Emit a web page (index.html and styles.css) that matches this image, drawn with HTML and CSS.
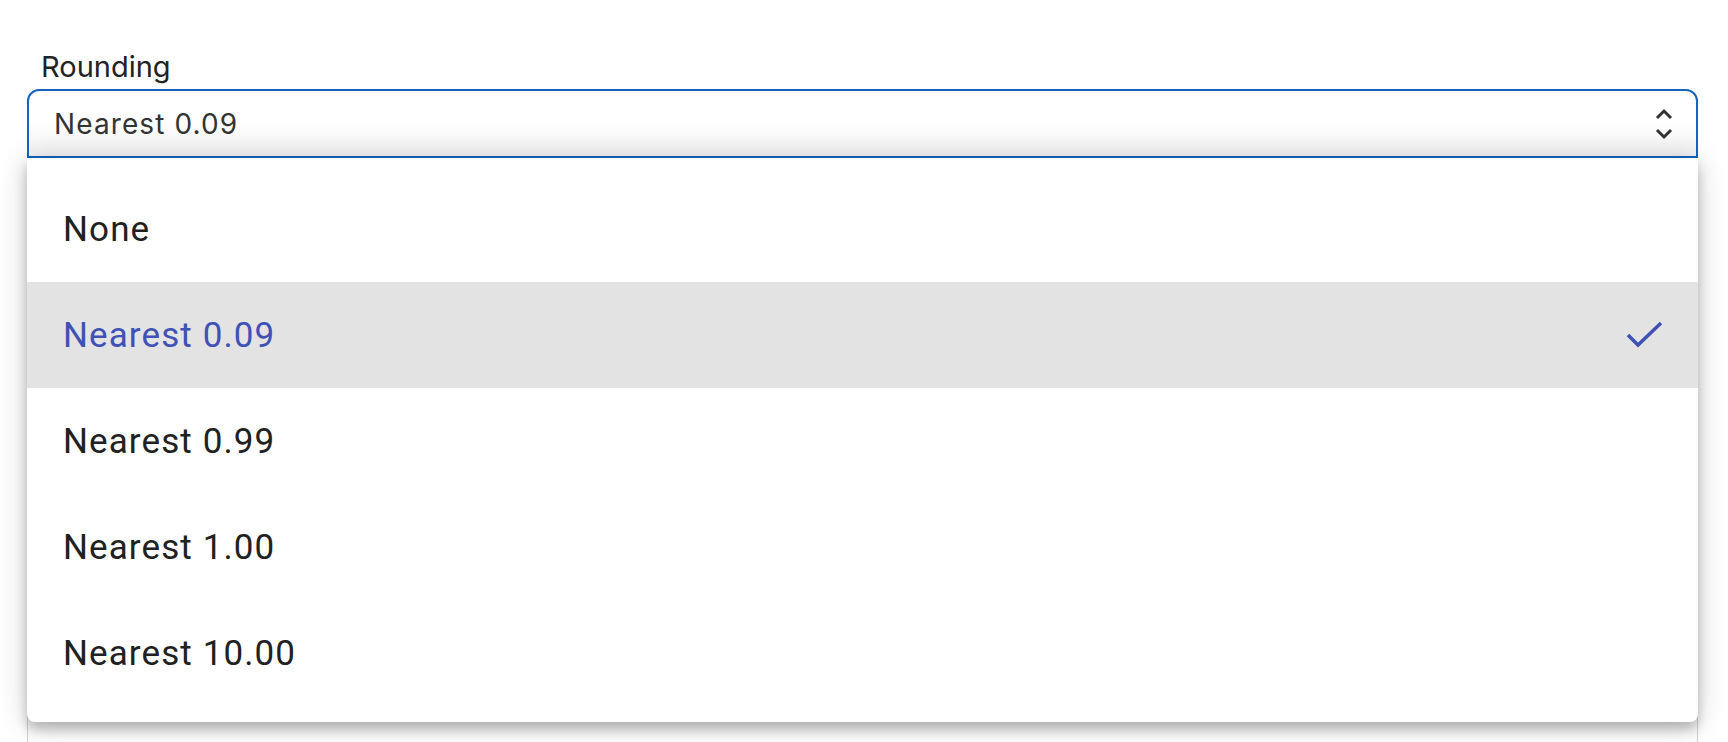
FILE: index.html
```html
<!DOCTYPE html>
<html lang="en">
<head>
<meta name="viewport" content="width=device-width, initial-scale=1">
<title>Rounding</title>
<link rel="stylesheet" href="styles.css">
</head>
<body>

<div class="form">
    <div class="field">
        <label class="field-label">Rounding</label>
        <div class="select-wrap">
            <div class="select open">
                <span class="select-value">Nearest 0.09</span>
                <svg class="select-arrows" width="18" height="34" viewBox="0 0 18 34">
                    <path d="M2 11 L9 4 L16 11" fill="none" stroke="#333" stroke-width="3"/>
                    <path d="M2 23 L9 30 L16 23" fill="none" stroke="#333" stroke-width="3"/>
                </svg>
            </div>

            <ul class="menu">
                <li class="menu-item">None</li>
                <li class="menu-item selected">Nearest 0.09
                    <svg class="check" width="38" height="28" viewBox="0 0 38 28">
                        <polyline points="2,14 12,24 35,2" fill="none" stroke="#3f51b5" stroke-width="3.5"/>
                    </svg>
                </li>
                <li class="menu-item">Nearest 0.99</li>
                <li class="menu-item">Nearest 1.00</li>
                <li class="menu-item">Nearest 10.00</li>
            </ul>
        </div>
    </div>

    <!-- next field, mostly hidden behind the open menu -->
    <div class="field next-field">
        <div class="input textarea"></div>
    </div>
</div>

</body>
</html>
```

FILE: styles.css
```css
* {
    box-sizing: border-box;
}

body {
    margin: 0;
    background: #fff;
    font-family: 'Inter', 'Roboto', sans-serif;
    color: #222;
    height: 742px;
    overflow: hidden;
}

.form {
    padding: 50px 30px 0 27px;
}

.field {
    margin-bottom: 28px;
}

.field-label {
    display: block;
    padding-left: 14px;
    font-size: 29px;
    line-height: 34px;
    margin-bottom: 5px;
    color: #222;
}

.select-wrap {
    position: relative;
}

.select {
    display: flex;
    align-items: center;
    justify-content: space-between;
    height: 69px;
    padding: 0 23px 0 25px;
    border: 2px solid #1565c0;
    border-radius: 12px;
    background: linear-gradient(#fff 45%, #f2f2f2);
}

.select.open {
    border-radius: 12px 12px 0 0;
}

.select-value {
    font-size: 28px;
    letter-spacing: 1.1px;
    color: #333;
}

.next-field {
    margin-top: 540px;
}

.input {
    height: 69px;
    border: 1px solid #d2d2d2;
    border-radius: 12px;
    padding: 0 24px;
    font-size: 28px;
    display: flex;
    align-items: center;
}

.textarea {
    height: 220px;
}

.menu {
    position: absolute;
    top: 100%;
    left: 0;
    right: 0;
    z-index: 10;
    margin: 0;
    padding: 18px 0 16px;
    list-style: none;
    background: #fff;
    border-radius: 0 0 8px 8px;
    box-shadow: 0 8px 12px rgba(0, 0, 0, 0.22), 0 2px 30px rgba(0, 0, 0, 0.18);
}

.menu-item {
    display: flex;
    align-items: center;
    justify-content: space-between;
    height: 106px;
    padding: 0 34px 0 36px;
    font-family: 'Roboto', sans-serif;
    font-size: 35px;
    letter-spacing: 1.1px;
    color: #212121;
}

.menu-item.selected {
    background: #e3e3e3;
    color: #3f51b5;
}
```
